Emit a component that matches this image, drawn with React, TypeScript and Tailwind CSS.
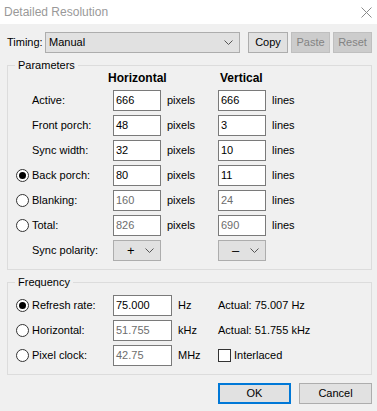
import React from 'react';

const font = { fontFamily: '"Liberation Sans", Arial, sans-serif' };

const Radio = ({ checked }: { checked?: boolean }) => (
  <div className="w-[13px] h-[13px] rounded-full border border-[#333333] bg-white flex items-center justify-center">
    {checked && <div className="w-[7px] h-[7px] rounded-full bg-[#000000]" />}
  </div>
);

const Field = ({ value, disabled, w = 'w-[48px]' }: { value: string; disabled?: boolean; w?: string }) => (
  <div
    className={`${w} h-[21px] border border-[#7a7a7a] bg-white flex items-center pl-[2px] ${
      disabled ? 'text-[#6d6d6d]' : 'text-black'
    }`}
  >
    {value}
  </div>
);

const Chevron = () => (
  <svg width="9" height="5" viewBox="0 0 9 5" className="shrink-0">
    <path d="M0.5 0.5 L4.5 4.5 L8.5 0.5" fill="none" stroke="#555" strokeWidth="1" />
  </svg>
);

const Polarity = ({ sign }: { sign: string }) => (
  <div className="w-[48px] h-[21px] border border-[#adadad] bg-[#e1e1e1] flex items-center justify-between pl-[13px] pr-[6px]">
    <span className="text-[13px] leading-none">{sign}</span>
    <Chevron />
  </div>
);

const params = [
  { label: 'Active:', h: '666', v: '666', radio: null },
  { label: 'Front porch:', h: '48', v: '3', radio: null },
  { label: 'Sync width:', h: '32', v: '10', radio: null },
  { label: 'Back porch:', h: '80', v: '11', radio: 'on' },
  { label: 'Blanking:', h: '160', v: '24', radio: 'off', disabled: true },
  { label: 'Total:', h: '826', v: '690', radio: 'off', disabled: true },
];

const freq = [
  { label: 'Refresh rate:', value: '75.000', unit: 'Hz', on: true, extra: 'Actual: 75.007 Hz' },
  { label: 'Horizontal:', value: '51.755', unit: 'kHz', on: false, extra: 'Actual: 51.755 kHz' },
  { label: 'Pixel clock:', value: '42.75', unit: 'MHz', on: false, extra: null },
];

export default function App() {
  return (
    <div className="w-[377px] h-[411px] bg-[#f0f0f0] text-[11px] text-black overflow-hidden" style={font}>
      {/* Title bar */}
      <div className="h-[24px] bg-white flex items-center justify-between pl-[4px] pr-[5px]">
        <span className="text-[12px] text-[#999999]">Detailed Resolution</span>
        <svg width="11" height="11" viewBox="0 0 11 11">
          <path d="M0.5 0.5 L10.5 10.5 M10.5 0.5 L0.5 10.5" stroke="#8a8a8a" strokeWidth="1" />
        </svg>
      </div>

      {/* Timing row */}
      <div className="flex items-center h-[21px] mt-[8px] pl-[7px]">
        <span className="w-[38px]">Timing:</span>
        <div className="w-[195px] h-[21px] border border-[#adadad] bg-[#e1e1e1] flex items-center justify-between pl-[3px] pr-[6px]">
          <span>Manual</span>
          <Chevron />
        </div>
        <button className="ml-[8px] w-[40px] h-[21px] border border-[#adadad] bg-[#e1e1e1]">Copy</button>
        <button className="ml-[3px] w-[39px] h-[21px] border border-[#bfbfbf] bg-[#cccccc] text-[#838383]">Paste</button>
        <button className="ml-[3px] w-[39px] h-[21px] border border-[#bfbfbf] bg-[#cccccc] text-[#838383]">Reset</button>
      </div>

      {/* Parameters group */}
      <div className="relative ml-[7px] mt-[12px] w-[365px] border border-[#dcdcdc] pl-[8px] pb-[8px]">
        <span className="absolute -top-[7px] left-[7px] px-[3px] bg-[#f0f0f0] leading-[13px]">Parameters</span>
        <div className="flex h-[24px] items-center font-bold text-[12px]">
          <div className="w-[92px]" />
          <div className="w-[112px]">Horizontal</div>
          <div>Vertical</div>
        </div>
        <div className="flex flex-col gap-[4px]">
          {params.map((p) => (
            <div key={p.label} className="flex items-center h-[21px]">
              <div className="w-[16px]">{p.radio && <Radio checked={p.radio === 'on'} />}</div>
              <div className="w-[81px]">{p.label}</div>
              <Field value={p.h} disabled={p.disabled} />
              <div className="w-[57px] pl-[6px]">pixels</div>
              <Field value={p.v} disabled={p.disabled} />
              <div className="pl-[6px]">lines</div>
            </div>
          ))}
          <div className="flex items-center h-[21px]">
            <div className="w-[16px]" />
            <div className="w-[81px]">Sync polarity:</div>
            <Polarity sign="+" />
            <div className="w-[57px]" />
            <Polarity sign="–" />
          </div>
        </div>
      </div>

      {/* Frequency group */}
      <div className="relative ml-[7px] mt-[12px] w-[365px] border border-[#dcdcdc] pl-[8px] pt-[12px] pb-[8px]">
        <span className="absolute -top-[7px] left-[7px] px-[3px] bg-[#f0f0f0] leading-[13px]">Frequency</span>
        <div className="flex flex-col gap-[4px]">
          {freq.map((f) => (
            <div key={f.label} className="flex items-center h-[21px]">
              <div className="w-[16px]">
                <Radio checked={f.on} />
              </div>
              <div className="w-[81px]">{f.label}</div>
              <Field value={f.value} disabled={!f.on} w="w-[59px]" />
              <div className="w-[46px] pl-[6px]">{f.unit}</div>
              {f.extra ? (
                <div>{f.extra}</div>
              ) : (
                <div className="flex items-center">
                  <div className="w-[13px] h-[13px] border border-[#333333] bg-white" />
                  <span className="ml-[3px]">Interlaced</span>
                </div>
              )}
            </div>
          ))}
        </div>
      </div>

      {/* Buttons */}
      <div className="flex justify-end gap-[8px] mt-[8px] pr-[5px]">
        <button className="w-[73px] h-[21px] border-2 border-[#0078d7] bg-[#e1e1e1]">OK</button>
        <button className="w-[73px] h-[21px] border border-[#adadad] bg-[#e1e1e1]">Cancel</button>
      </div>
    </div>
  );
}
